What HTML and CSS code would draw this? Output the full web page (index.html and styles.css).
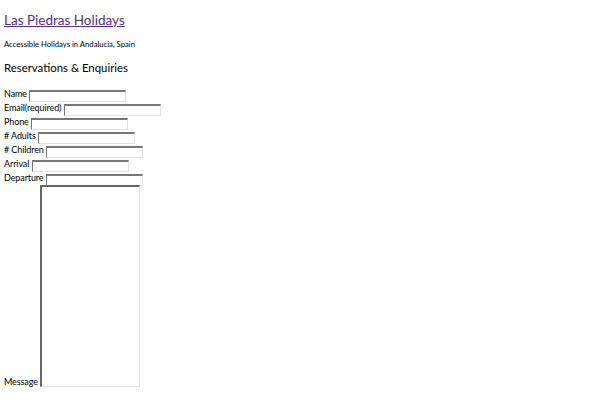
FILE: index.html
```html
<!DOCTYPE html>
<html>
<head>
<meta charset="utf-8">
<link rel="stylesheet" href="styles.css">
</head>
<body>
<h1 class="title"><a href="#" class="title-link">Las Piedras Holidays</a></h1>
<p class="tagline">Accessible Holidays in Andalucia, Spain</p>
<h2 class="heading">Reservations &amp; Enquiries</h2>
<form class="form">
<div class="row"><label class="lbl">Name</label> <input class="field" type="text"></div>
<div class="row"><label class="lbl">Email(required)</label> <input class="field" type="text"></div>
<div class="row"><label class="lbl">Phone</label> <input class="field" type="text"></div>
<div class="row"><label class="lbl"># Adults</label> <input class="field" type="text"></div>
<div class="row"><label class="lbl"># Children</label> <input class="field" type="text"></div>
<div class="row"><label class="lbl">Arrival</label> <input class="field" type="text"></div>
<div class="row"><label class="lbl">Departure</label> <input class="field" type="text"></div>
<div class="row row-msg"><label class="lbl">Message</label> <textarea class="msg"></textarea></div>
</form>
</body>
</html>
```
FILE: styles.css
```css
html, body {
  margin: 0;
  padding: 0;
  background: #fff;
}
body {
  padding: 0 4px;
  font-family: Lato, "Liberation Sans", sans-serif;
  color: #000;
}
.title {
  margin: 0;
  padding-top: 12px;
  font-size: 13.5px;
  font-weight: normal;
  line-height: 17px;
  height: 17px;
}
.title-link {
  color: #5b2d8e;
  text-decoration: underline;
}
.tagline {
  margin: 0;
  padding-top: 10px;
  font-size: 7.7px;
  line-height: 10px;
}
.heading {
  margin: 0;
  padding-top: 11px;
  font-size: 11.4px;
  font-weight: normal;
  line-height: 15px;
}
.form {
  margin: 0;
  padding-top: 12px;
}
.row {
  font-size: 9px;
  line-height: 14px;
  height: 14px;
  color: #000;
}
.row-msg {
  height: auto;
}
.lbl {
  letter-spacing: -0.1px;
}
.field {
  box-sizing: border-box;
  width: 97px;
  height: 12px;
  padding: 0;
  margin: 0;
  border-style: solid;
  border-width: 2px 1px 1px 1px;
  border-color: #777 #e2e2e2 #e2e2e2 #777;
  font-size: 8px;
  vertical-align: -2px;
  background: #fff;
}
.msg {
  box-sizing: border-box;
  width: 100px;
  height: 202px;
  padding: 0;
  margin: 0;
  border-style: solid;
  border-width: 2px 1px 1px 2px;
  border-color: #666 #e2e2e2 #e2e2e2 #666;
  resize: none;
  vertical-align: -2px;
  background: #fff;
}
```
